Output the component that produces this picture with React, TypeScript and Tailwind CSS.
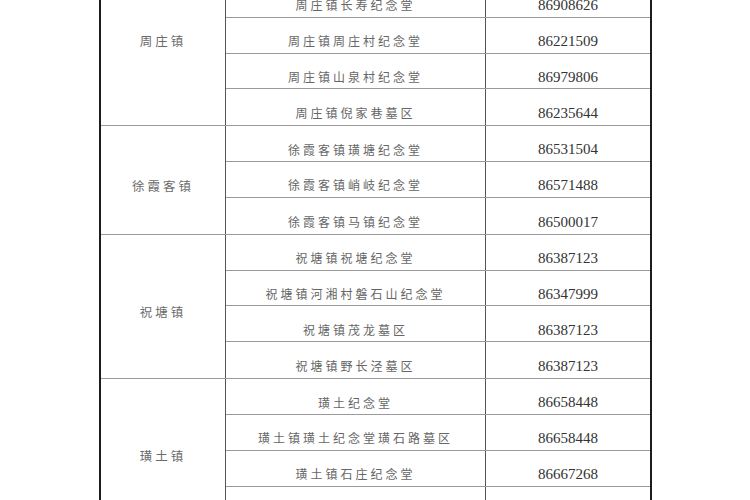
const groups = [
  {
    town: "周庄镇",
    rows: [
      ["周庄镇华西纪念堂", "86908626"],
      ["周庄镇长寿纪念堂", "86908626"],
      ["周庄镇周庄村纪念堂", "86221509"],
      ["周庄镇山泉村纪念堂", "86979806"],
      ["周庄镇倪家巷墓区", "86235644"],
    ],
  },
  {
    town: "徐霞客镇",
    rows: [
      ["徐霞客镇璜塘纪念堂", "86531504"],
      ["徐霞客镇峭岐纪念堂", "86571488"],
      ["徐霞客镇马镇纪念堂", "86500017"],
    ],
  },
  {
    town: "祝塘镇",
    rows: [
      ["祝塘镇祝塘纪念堂", "86387123"],
      ["祝塘镇河湘村磐石山纪念堂", "86347999"],
      ["祝塘镇茂龙墓区", "86387123"],
      ["祝塘镇野长泾墓区", "86387123"],
    ],
  },
  {
    town: "璜土镇",
    rows: [
      ["璜土纪念堂", "86658448"],
      ["璜土镇璜土纪念堂璜石路墓区", "86658448"],
      ["璜土镇石庄纪念堂", "86667268"],
      ["璜土镇璜土村纪念堂", "86658448"],
    ],
  },
];

const cjk = "font-['Noto_Sans_CJK_SC',sans-serif]";
const serif = "font-['Liberation_Serif',serif]";

export default function App() {
  return (
    <div className="w-[750px] h-[500px] overflow-hidden bg-white">
      <div className="ml-[99px] mt-[-54px] w-[553px] border-x-[2px] border-[#1c1c1c]">
        {groups.map((g) => (
          <div key={g.town} className="flex border-b border-[#9a9a9a]">
            <div
              className={`w-[125px] shrink-0 border-r border-[#555] flex items-center justify-center pt-[12px] text-[12.5px] tracking-[3px] text-[#6a6a6a] ${cjk}`}
            >
              {g.town}
            </div>
            <div className="flex-1">
              {g.rows.map(([name, tel], i) => (
                <div
                  key={name}
                  className={`flex h-[35.85px] ${i < g.rows.length - 1 ? "border-b border-[#9a9a9a]" : ""}`}
                >
                  <div
                    className={`w-[260px] shrink-0 border-r border-[#555] flex items-center justify-center pt-[12px] text-[12px] tracking-[3px] text-[#666] ${cjk}`}
                  >
                    {name}
                  </div>
                  <div
                    className={`flex-1 flex items-center justify-center pt-[12px] text-[15px] text-[#333] ${serif}`}
                  >
                    {tel}
                  </div>
                </div>
              ))}
            </div>
          </div>
        ))}
      </div>
    </div>
  );
}
